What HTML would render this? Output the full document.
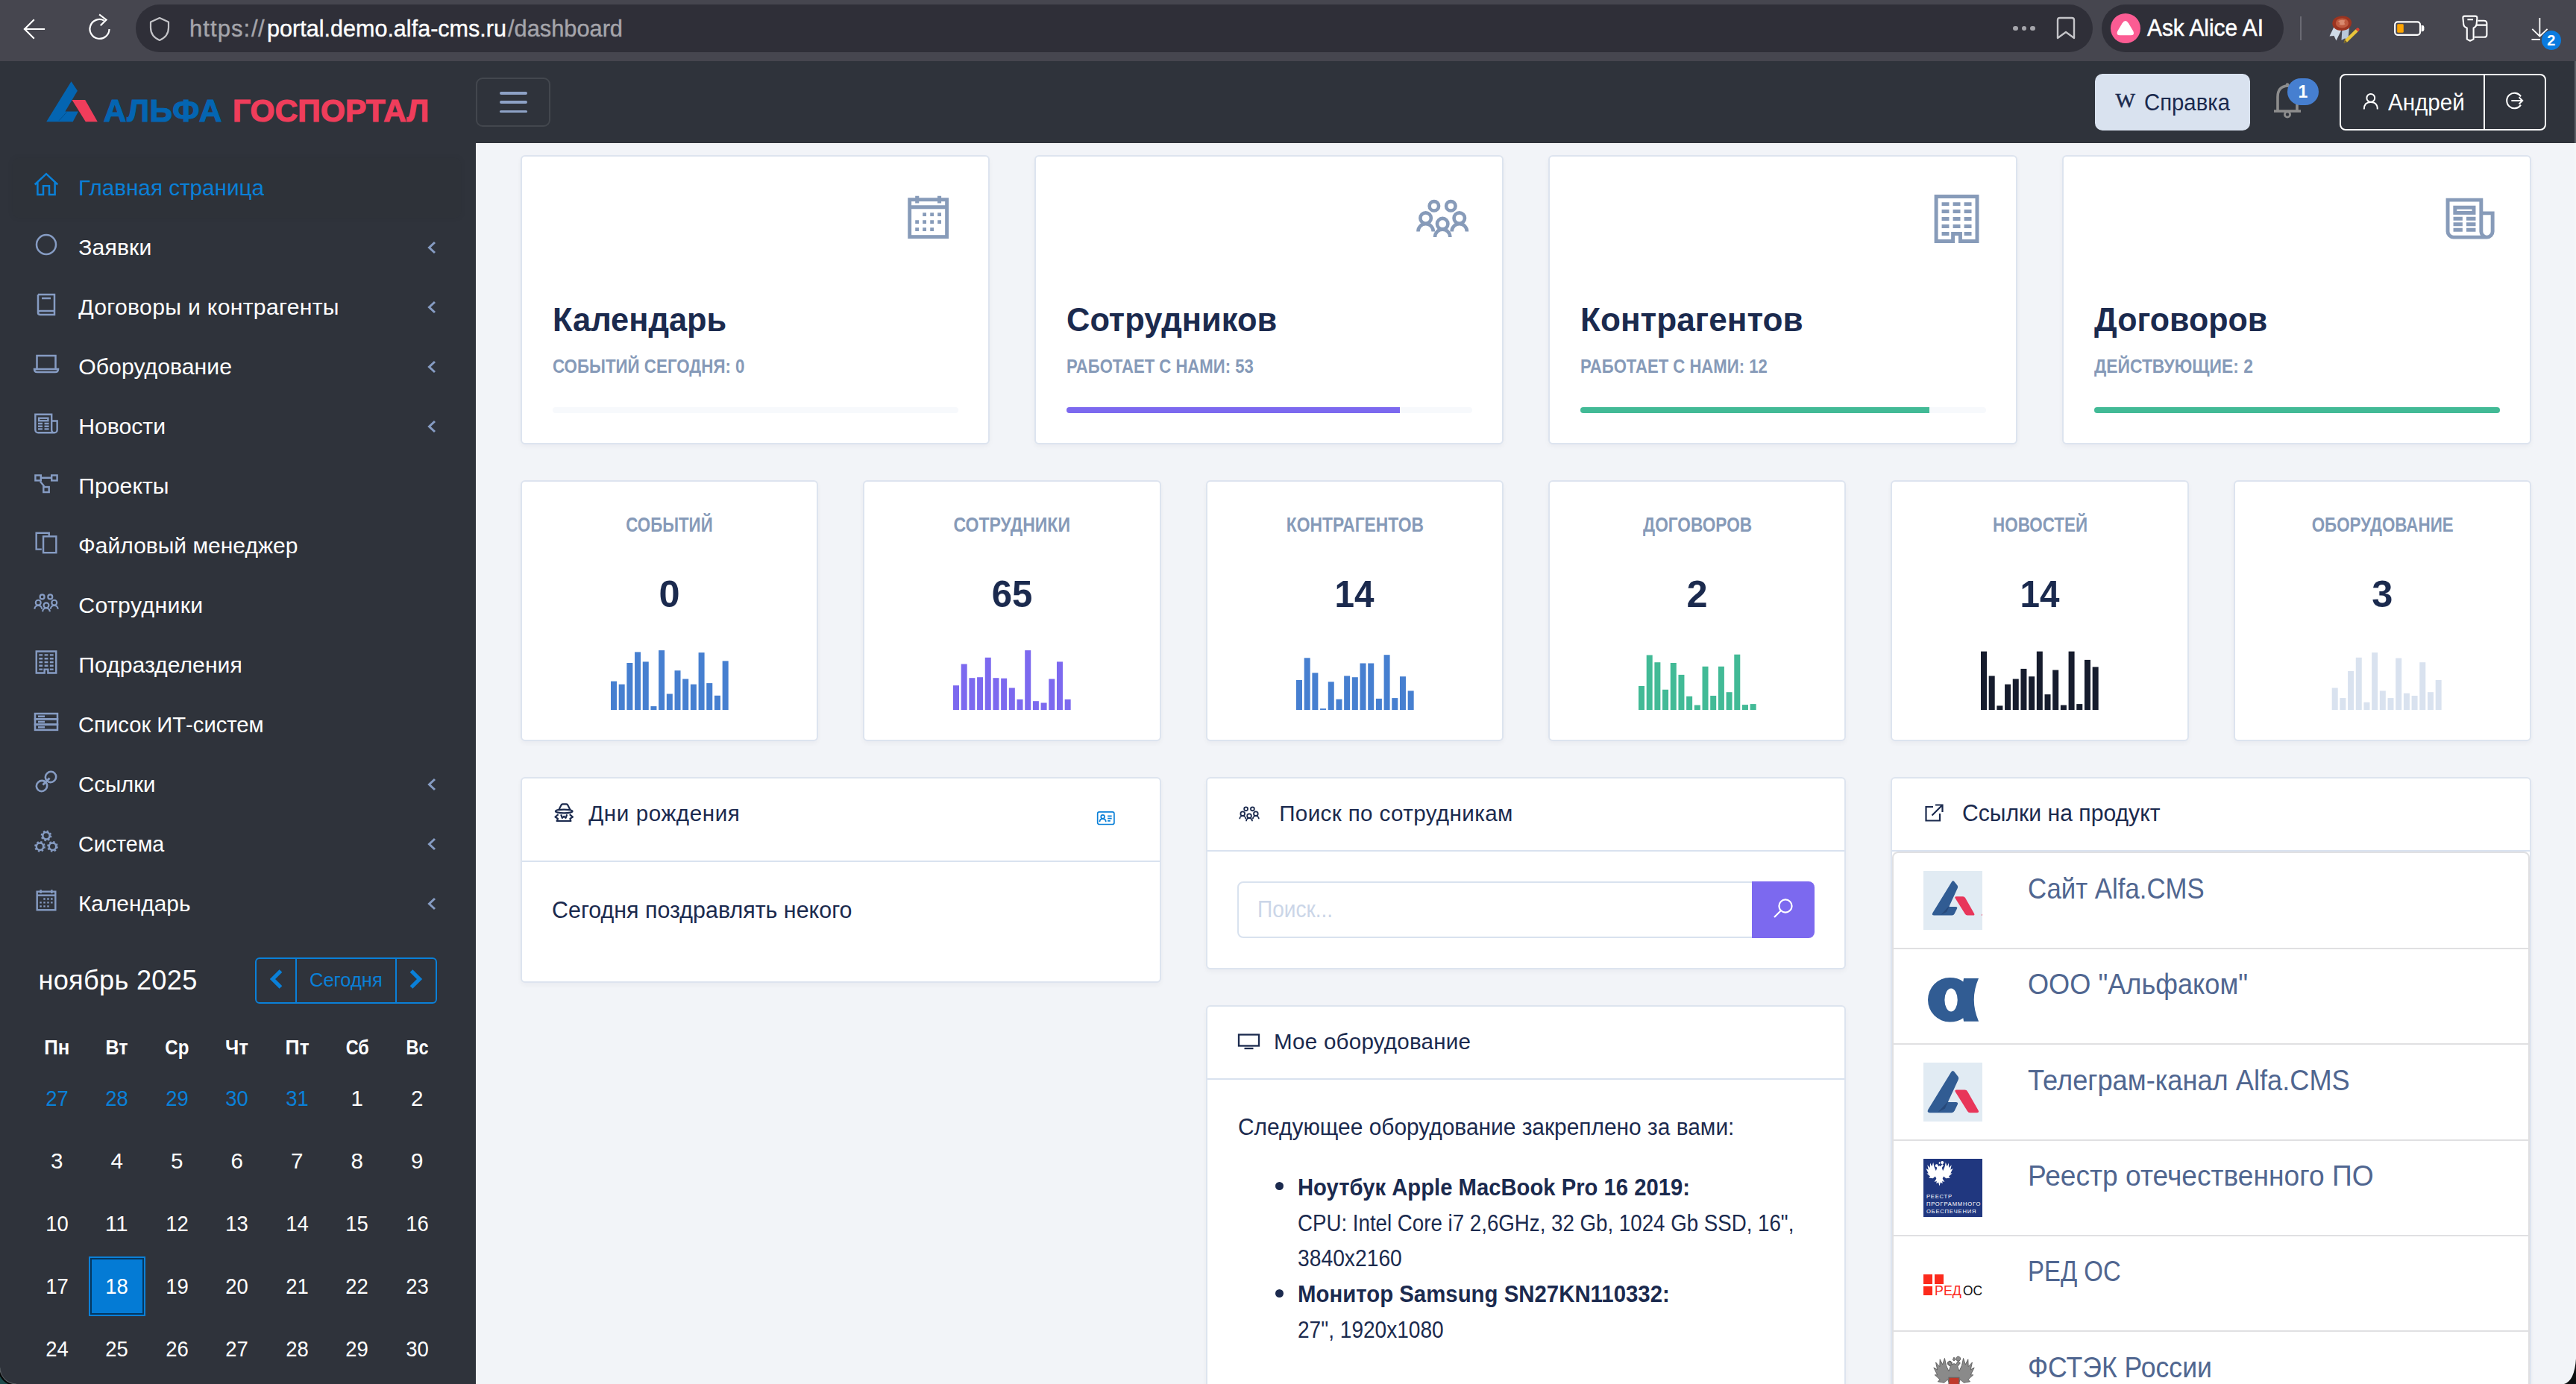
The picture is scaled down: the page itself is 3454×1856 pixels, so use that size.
<!DOCTYPE html><html lang="ru"><head><meta charset="utf-8"><meta name="viewport" content="width=3454"><title>Альфа Госпортал</title><style>

html,body{margin:0;padding:0;width:3454px;height:1856px;overflow:hidden}
body{font-family:"Liberation Sans",sans-serif;background:#f2f4f8}
#root{position:relative;width:3454px;height:1856px;overflow:hidden;background:#f2f4f8}
.a,.t{position:absolute;display:block}
.t{white-space:nowrap;line-height:1;font-style:normal}
i{font-style:normal}
#chromebg{position:absolute;left:0;top:0;width:3454px;height:82px;background:#46464f}
.urlpill{position:absolute;left:182px;top:6px;width:2624px;height:64px;border-radius:32px;background:#2f2f38}
.alicepill{position:absolute;left:2818px;top:6px;width:244px;height:64px;border-radius:32px;background:#2f2f38}
#headerbg{position:absolute;left:0;top:82px;width:3454px;height:110px;background:#2f333b}
#header>*,#sidebar>*,#chrome>*{ }
#sidebarbg{position:absolute;left:0;top:192px;width:638px;height:1664px;background:#2f333b}
.toggler{box-sizing:border-box;border:2px solid #43474e;border-radius:9px}
.helpbtn{background:#d9e2ef;border-radius:10px}
.usergrp{box-sizing:border-box;border:2.4px solid #fff;border-radius:8px}
.active{background:rgba(0,0,0,.02);border-radius:8px;box-shadow:0 0 8px rgba(0,0,0,.06)}
.calbtn{box-sizing:border-box;border:2px solid #0a80d8;border-radius:6px}
.today{box-sizing:border-box;background:#047bd5;border:2.4px solid #0a80d8;box-shadow:inset 0 0 0 2px #04365f}
.card{box-sizing:border-box;background:#fff;border:2px solid #dde4ef;border-radius:6px;box-shadow:0 3px 6px rgba(22,28,45,.04)}
.prog{height:8px;border-radius:4px;background:#f7f9fc}
.sep{height:2.4px;background:#d9e2ef}
.inp{box-sizing:border-box;border:2.4px solid #d9e2ef;border-radius:8px 0 0 8px;background:#fff}
.sbtn{background:#7c69ef;border-radius:0 8px 8px 0}
.lg{box-sizing:border-box;border:2px solid #e0e0e2;border-radius:8px 8px 0 0;background:#fff}
#edge{position:absolute;right:0;top:82px;width:2px;height:1774px;background:rgba(255,255,255,.22)}
#hline{position:absolute;left:638px;top:191.6px;width:2816px;height:1.6px;background:#fff}

</style></head><body><div id="root">
<div id="main">
<div class="a card" style="left:698.0px;top:208.0px;width:629.0px;height:387.7px;"></div>
<svg class="a" style="left:1200.3px;top:248.3px" width="89.3" height="89.3" viewBox="-22 -22 44 44" fill="none" stroke="#879bb9" stroke-width="2.4"><rect x="-12.3" y="-12.3" width="24.6" height="24.6"/><path d="M-12.3 -7.35H12.3"/><path d="M-7.35 -14.7V-9.9M7.35 -14.7V-9.9" stroke-width="2.5"/><path d="M-3.68 -2.49H-1.30M1.27 -2.49H3.65M6.18 -2.49H8.56M-8.59 2.42H-6.21M-3.68 2.42H-1.30M1.27 2.42H3.65M6.18 2.42H8.56M-8.59 7.37H-6.21M-3.68 7.37H-1.30M1.27 7.37H3.65" stroke-width="2.38"/></svg>
<span class="t" style="left:741.4px;top:407.4px;font-size:44.50px;font-weight:700;transform:scaleX(0.9749);transform-origin:0 50%;color:#1b2a4e;">Календарь</span>
<span class="t" style="left:741.4px;top:478.1px;font-size:26.60px;font-weight:700;transform:scaleX(0.8401);transform-origin:0 50%;color:#869ab8;">СОБЫТИЙ СЕГОДНЯ: 0</span>
<div class="a prog" style="left:741.0px;top:546.0px;width:543.5px"></div>
<div class="a card" style="left:1387.0px;top:208.0px;width:629.0px;height:387.7px;"></div>
<svg class="a" style="left:1887.8px;top:246.2px" width="92.4" height="92.4" viewBox="-22 -22 44 44" fill="none" stroke="#879bb9" stroke-width="2.2"><circle cx="-5.4" cy="-7.57" r="2.96"/><circle cx="5.3" cy="-7.57" r="2.96"/><circle cx="-10.75" cy="0.17" r="3.44"/><circle cx="10.75" cy="0.17" r="3.44"/><circle cx="0" cy="3.79" r="3.44"/><path d="M-15.57 8.75V8.6A4.82 4.82 0 0 1 -5.93 8.6V8.75M5.93 8.75V8.6A4.82 4.82 0 0 1 15.57 8.6V8.75M-4.82 12.3V12.15A4.82 4.82 0 0 1 4.82 12.15V12.3"/></svg>
<span class="t" style="left:1430.4px;top:407.4px;font-size:44.50px;font-weight:700;transform:scaleX(0.9770);transform-origin:0 50%;color:#1b2a4e;">Сотрудников</span>
<span class="t" style="left:1430.4px;top:478.1px;font-size:26.60px;font-weight:700;transform:scaleX(0.8312);transform-origin:0 50%;color:#869ab8;">РАБОТАЕТ С НАМИ: 53</span>
<div class="a prog" style="left:1430.0px;top:546.0px;width:543.5px"></div><div class="a" style="left:1430.0px;top:546.0px;width:446.6px;height:8px;border-radius:4px 0 0 4px;background:#7c69ef"></div>
<div class="a card" style="left:2076.0px;top:208.0px;width:629.0px;height:387.7px;"></div>
<svg class="a" style="left:2577.5px;top:247.5px" width="91.1" height="91.1" viewBox="-22 -22 44 44" fill="none" stroke="#879bb9" stroke-width="2.4"><path d="M-2.37 14.52H-13.26V-14.52H13.26V14.52H2.37V9.63H-2.37Z" stroke-linecap="butt"/><path d="M-9.65 -9.63H-4.87M4.87 -9.63H9.65M-2.39 -9.63H2.39M-9.65 -4.82H-4.87M4.87 -4.82H9.65M-2.39 -4.82H2.39M-9.65 0.00H-4.87M4.87 0.00H9.65M-2.39 0.00H2.39M-9.65 4.82H-4.87M4.87 4.82H9.65M-2.39 4.82H2.39M-9.65 9.63H-4.87M4.87 9.63H9.65"/></svg>
<span class="t" style="left:2119.4px;top:407.4px;font-size:44.50px;font-weight:700;transform:scaleX(0.9925);transform-origin:0 50%;color:#1b2a4e;">Контрагентов</span>
<span class="t" style="left:2119.4px;top:478.1px;font-size:26.60px;font-weight:700;transform:scaleX(0.8312);transform-origin:0 50%;color:#869ab8;">РАБОТАЕТ С НАМИ: 12</span>
<div class="a prog" style="left:2119.0px;top:546.0px;width:543.5px"></div><div class="a" style="left:2119.0px;top:546.0px;width:468.2px;height:8px;border-radius:4px 0 0 4px;background:#42ba96"></div>
<div class="a card" style="left:2765.0px;top:208.0px;width:629.0px;height:387.7px;"></div>
<svg class="a" style="left:3267.0px;top:247.8px" width="90.2" height="90.2" viewBox="-22 -22 44 44" fill="none" stroke="#879bb9" stroke-width="2.4"><path d="M7.19 -3.52H14.66V8.46A3.74 3.74 0 0 1 10.93 12.2H-10.92A3.74 3.74 0 0 1 -14.66 8.46V-12.2H7.19V8.46A3.74 3.74 0 0 0 10.93 12.2"/><rect x="-9.9" y="-7.26" width="12.3" height="3.52"/><path d="M-11 0.04H-5M-2.47 0.04H3.6M-11 3.74H-5M-2.47 3.74H3.6M-11 7.40H-5M-2.47 7.40H3.6"/></svg>
<span class="t" style="left:2808.4px;top:407.4px;font-size:44.50px;font-weight:700;transform:scaleX(0.9666);transform-origin:0 50%;color:#1b2a4e;">Договоров</span>
<span class="t" style="left:2808.4px;top:478.1px;font-size:26.60px;font-weight:700;transform:scaleX(0.8596);transform-origin:0 50%;color:#869ab8;">ДЕЙСТВУЮЩИЕ: 2</span>
<div class="a prog" style="left:2808.0px;top:546.0px;width:543.5px"></div><div class="a" style="left:2808.0px;top:546.0px;width:544.0px;height:8px;border-radius:4px;background:#42ba96"></div>
<div class="a card" style="left:698.0px;top:644.0px;width:399.3px;height:349.8px;"></div>
<span class="t" style="left:827.2px;top:690.8px;font-size:27.00px;font-weight:700;transform:scaleX(0.8250);transform-origin:50% 50%;color:#869ab8;">СОБЫТИЙ</span>
<span class="t" style="left:883.6px;top:772.4px;font-size:50.50px;font-weight:700;color:#1b2a4e;">0</span>
<svg class="a" style="left:818.9px;top:872px" width="158" height="80" viewBox="0 0 158 80" fill="#467fd0"><rect x="0.00" y="41.6" width="8" height="38.4"/><rect x="10.69" y="45.7" width="8" height="34.3"/><rect x="21.38" y="17.0" width="8" height="63.0"/><rect x="32.07" y="2.4" width="8" height="77.6"/><rect x="42.76" y="15.4" width="8" height="64.6"/><rect x="53.45" y="75.1" width="8" height="4.9"/><rect x="64.14" y="0.1" width="8" height="79.9"/><rect x="74.83" y="58.5" width="8" height="21.5"/><rect x="85.52" y="27.2" width="8" height="52.8"/><rect x="96.21" y="38.5" width="8" height="41.5"/><rect x="106.90" y="45.7" width="8" height="34.3"/><rect x="117.59" y="3.1" width="8" height="76.9"/><rect x="128.28" y="44.1" width="8" height="35.9"/><rect x="138.97" y="60.8" width="8" height="19.2"/><rect x="149.66" y="14.4" width="8" height="65.6"/></svg>
<div class="a card" style="left:1157.3px;top:644.0px;width:399.3px;height:349.8px;"></div>
<span class="t" style="left:1265.3px;top:690.8px;font-size:27.00px;font-weight:700;transform:scaleX(0.8537);transform-origin:50% 50%;color:#869ab8;">СОТРУДНИКИ</span>
<span class="t" style="left:1328.9px;top:772.4px;font-size:50.50px;font-weight:700;transform:scaleX(0.9720);transform-origin:50% 50%;color:#1b2a4e;">65</span>
<svg class="a" style="left:1278.2px;top:872px" width="158" height="80" viewBox="0 0 158 80" fill="#7c69ef"><rect x="0.00" y="47.2" width="8" height="32.8"/><rect x="10.69" y="18.5" width="8" height="61.5"/><rect x="21.38" y="37.2" width="8" height="42.8"/><rect x="32.07" y="36.2" width="8" height="43.8"/><rect x="42.76" y="9.8" width="8" height="70.2"/><rect x="53.45" y="37.2" width="8" height="42.8"/><rect x="64.14" y="37.7" width="8" height="42.3"/><rect x="74.83" y="50.5" width="8" height="29.5"/><rect x="85.52" y="65.9" width="8" height="14.1"/><rect x="96.21" y="0.1" width="8" height="79.9"/><rect x="106.90" y="68.2" width="8" height="11.8"/><rect x="117.59" y="70.5" width="8" height="9.5"/><rect x="128.28" y="38.5" width="8" height="41.5"/><rect x="138.97" y="15.4" width="8" height="64.6"/><rect x="149.66" y="65.9" width="8" height="14.1"/></svg>
<div class="a card" style="left:1616.7px;top:644.0px;width:399.3px;height:349.8px;"></div>
<span class="t" style="left:1707.5px;top:690.8px;font-size:27.00px;font-weight:700;transform:scaleX(0.8455);transform-origin:50% 50%;color:#869ab8;">КОНТРАГЕНТОВ</span>
<span class="t" style="left:1788.2px;top:772.4px;font-size:50.50px;font-weight:700;transform:scaleX(0.9435);transform-origin:50% 50%;color:#1b2a4e;">14</span>
<svg class="a" style="left:1737.5px;top:872px" width="158" height="80" viewBox="0 0 158 80" fill="#467fd0"><rect x="0.00" y="40.0" width="8" height="40.0"/><rect x="10.69" y="10.3" width="8" height="69.7"/><rect x="21.38" y="30.3" width="8" height="49.7"/><rect x="32.07" y="78.2" width="8" height="1.8"/><rect x="42.76" y="42.3" width="8" height="37.7"/><rect x="53.45" y="65.7" width="8" height="14.3"/><rect x="64.14" y="34.4" width="8" height="45.6"/><rect x="74.83" y="36.2" width="8" height="43.8"/><rect x="85.52" y="17.5" width="8" height="62.5"/><rect x="96.21" y="17.5" width="8" height="62.5"/><rect x="106.90" y="64.9" width="8" height="15.1"/><rect x="117.59" y="6.2" width="8" height="73.8"/><rect x="128.28" y="64.1" width="8" height="15.9"/><rect x="138.97" y="35.2" width="8" height="44.8"/><rect x="149.66" y="54.4" width="8" height="25.6"/></svg>
<div class="a card" style="left:2076.0px;top:644.0px;width:399.3px;height:349.8px;"></div>
<span class="t" style="left:2188.6px;top:690.8px;font-size:27.00px;font-weight:700;transform:scaleX(0.8383);transform-origin:50% 50%;color:#869ab8;">ДОГОВОРОВ</span>
<span class="t" style="left:2261.6px;top:772.4px;font-size:50.50px;font-weight:700;color:#1b2a4e;">2</span>
<svg class="a" style="left:2196.9px;top:872px" width="158" height="80" viewBox="0 0 158 80" fill="#42ba96"><rect x="0.00" y="48.0" width="8" height="32.0"/><rect x="10.69" y="6.5" width="8" height="73.5"/><rect x="21.38" y="16.2" width="8" height="63.8"/><rect x="32.07" y="52.8" width="8" height="27.2"/><rect x="42.76" y="17.0" width="8" height="63.0"/><rect x="53.45" y="32.9" width="8" height="47.1"/><rect x="64.14" y="61.8" width="8" height="18.2"/><rect x="74.83" y="73.6" width="8" height="6.4"/><rect x="85.52" y="21.8" width="8" height="58.2"/><rect x="96.21" y="61.0" width="8" height="19.0"/><rect x="106.90" y="21.8" width="8" height="58.2"/><rect x="117.59" y="56.2" width="8" height="23.8"/><rect x="128.28" y="5.7" width="8" height="74.3"/><rect x="138.97" y="73.1" width="8" height="6.9"/><rect x="149.66" y="72.1" width="8" height="7.9"/></svg>
<div class="a card" style="left:2535.3px;top:644.0px;width:399.3px;height:349.8px;"></div>
<span class="t" style="left:2658.5px;top:690.8px;font-size:27.00px;font-weight:700;transform:scaleX(0.8297);transform-origin:50% 50%;color:#869ab8;">НОВОСТЕЙ</span>
<span class="t" style="left:2706.9px;top:772.4px;font-size:50.50px;font-weight:700;transform:scaleX(0.9435);transform-origin:50% 50%;color:#1b2a4e;">14</span>
<svg class="a" style="left:2656.2px;top:872px" width="158" height="80" viewBox="0 0 158 80" fill="#161c2d"><rect x="0.00" y="1.6" width="8" height="78.4"/><rect x="10.69" y="34.4" width="8" height="45.6"/><rect x="21.38" y="74.4" width="8" height="5.6"/><rect x="32.07" y="45.7" width="8" height="34.3"/><rect x="42.76" y="38.5" width="8" height="41.5"/><rect x="53.45" y="24.9" width="8" height="55.1"/><rect x="64.14" y="35.2" width="8" height="44.8"/><rect x="74.83" y="1.6" width="8" height="78.4"/><rect x="85.52" y="59.2" width="8" height="20.8"/><rect x="96.21" y="26.5" width="8" height="53.5"/><rect x="106.90" y="73.6" width="8" height="6.4"/><rect x="117.59" y="1.6" width="8" height="78.4"/><rect x="128.28" y="72.1" width="8" height="7.9"/><rect x="138.97" y="12.9" width="8" height="67.1"/><rect x="149.66" y="22.4" width="8" height="57.6"/></svg>
<div class="a card" style="left:2994.7px;top:644.0px;width:399.3px;height:349.8px;"></div>
<span class="t" style="left:3079.7px;top:690.8px;font-size:27.00px;font-weight:700;transform:scaleX(0.8286);transform-origin:50% 50%;color:#869ab8;">ОБОРУДОВАНИЕ</span>
<span class="t" style="left:3180.3px;top:772.4px;font-size:50.50px;font-weight:700;color:#1b2a4e;">3</span>
<svg class="a" style="left:3115.5px;top:872px" width="158" height="80" viewBox="0 0 158 80" fill="#d9e2ef"><rect x="10.69" y="50.5" width="8" height="29.5"/><rect x="21.38" y="64.1" width="8" height="15.9"/><rect x="32.07" y="28.0" width="8" height="52.0"/><rect x="42.76" y="9.8" width="8" height="70.2"/><rect x="53.45" y="69.8" width="8" height="10.2"/><rect x="64.14" y="3.1" width="8" height="76.9"/><rect x="74.83" y="54.4" width="8" height="25.6"/><rect x="85.52" y="64.1" width="8" height="15.9"/><rect x="96.21" y="10.6" width="8" height="69.4"/><rect x="106.90" y="57.7" width="8" height="22.3"/><rect x="117.59" y="61.0" width="8" height="19.0"/><rect x="128.28" y="16.2" width="8" height="63.8"/><rect x="138.97" y="56.2" width="8" height="23.8"/><rect x="149.66" y="40.0" width="8" height="40.0"/></svg>
<div class="a card" style="left:698.0px;top:1042.0px;width:858.7px;height:275.7px;"></div>
<i class="a sep" style="left:700px;top:1153.5px;width:854.7px"></i>
<svg class="a" style="left:740.9px;top:1076.3px" width="30.4" height="27.2" viewBox="100 150 280 250" fill="none" stroke="#1b2a4e" stroke-width="20" stroke-linejoin="round"><path d="M175 245L208 180Q215 172 225 172H268Q278 172 285 180L318 245"/><ellipse cx="240" cy="260" rx="105" ry="22"/><path d="M170 298L132 330L165 352L152 380H325L315 352L348 330L310 298"/><path d="M203 300L218 342L240 322L262 342L277 300"/></svg>
<span class="t" style="left:789.2px;top:1076.4px;font-size:29.60px;letter-spacing:0.592px;color:#1b2a4e;">Дни рождения</span>
<svg class="a" style="left:1469.9px;top:1087.4px" width="25.6" height="20.4" viewBox="0 0 27 22" fill="none" stroke="#0a80d8" stroke-width="1.8"><rect x="1.5" y="2" width="24" height="18" rx="2.5"/><circle cx="9" cy="9" r="2.6"/><path d="M4.5 16.5Q4.5 12 9 12Q13.5 12 13.5 16.5M16 8H22M16 11.5H22M16 15H20"/></svg>
<span class="t" style="left:740.3px;top:1204.9px;font-size:31.00px;transform:scaleX(0.9813);transform-origin:0 50%;color:#1b2a4e;">Сегодня поздравлять некого</span>
<div class="a card" style="left:1616.7px;top:1042.0px;width:858.7px;height:257.5px;"></div>
<i class="a sep" style="left:1618.7px;top:1139.7px;width:854.7px"></i>
<svg class="a" style="left:1656.5px;top:1073.0px" width="36.1" height="36.1" viewBox="-22 -22 44 44" fill="none" stroke="#1b2a4e" stroke-width="2.2"><circle cx="-5.4" cy="-7.57" r="2.96"/><circle cx="5.3" cy="-7.57" r="2.96"/><circle cx="-10.75" cy="0.17" r="3.44"/><circle cx="10.75" cy="0.17" r="3.44"/><circle cx="0" cy="3.79" r="3.44"/><path d="M-15.57 8.75V8.6A4.82 4.82 0 0 1 -5.93 8.6V8.75M5.93 8.75V8.6A4.82 4.82 0 0 1 15.57 8.6V8.75M-4.82 12.3V12.15A4.82 4.82 0 0 1 4.82 12.15V12.3"/></svg>
<span class="t" style="left:1715.2px;top:1076.4px;font-size:29.60px;letter-spacing:0.380px;color:#1b2a4e;">Поиск по сотрудникам</span>
<div class="a inp" style="left:1659.3px;top:1182px;width:692px;height:76px"></div>
<div class="a sbtn" style="left:2349.3px;top:1182px;width:84px;height:76px"></div>
<span class="t" style="left:1685.7px;top:1203.8px;font-size:31.00px;transform:scaleX(0.9039);transform-origin:0 50%;color:#cbd6e8;">Поиск...</span>
<svg class="a" style="left:2376px;top:1203px" width="30" height="30" viewBox="0 0 30 30" fill="none" stroke="#fff" stroke-width="2.2"><circle cx="18" cy="12" r="8.6"/><path d="M11.8 18.2L3 27"/></svg>
<div class="a card" style="left:1616.7px;top:1348.0px;width:858.7px;height:560.0px;"></div>
<i class="a sep" style="left:1618.7px;top:1446px;width:854.7px"></i>
<svg class="a" style="left:1659px;top:1385px" width="32" height="24" viewBox="0 0 32 24" fill="none" stroke="#1b2a4e" stroke-width="2.3"><rect x="2" y="2.5" width="27" height="15"/><path d="M9.5 21H21.5"/></svg>
<span class="t" style="left:1707.9px;top:1382.4px;font-size:29.60px;letter-spacing:0.220px;color:#1b2a4e;">Мое оборудование</span>
<span class="t" style="left:1659.6px;top:1496.3px;font-size:31.00px;transform:scaleX(0.9644);transform-origin:0 50%;color:#1b2a4e;">Следующее оборудование закреплено за вами:</span>
<i class="a" style="left:1710px;top:1585px;width:11.4px;height:11.4px;border-radius:6px;background:#1b2a4e"></i>
<span class="t" style="left:1739.8px;top:1576.5px;font-size:31.00px;font-weight:700;transform:scaleX(0.9433);transform-origin:0 50%;color:#1b2a4e;">Ноутбук Apple MacBook Pro 16 2019:</span>
<span class="t" style="left:1739.8px;top:1624.5px;font-size:31.00px;transform:scaleX(0.8931);transform-origin:0 50%;color:#1b2a4e;">CPU: Intel Core i7 2,6GHz, 32 Gb, 1024 Gb SSD, 16",</span>
<span class="t" style="left:1739.8px;top:1672.3px;font-size:31.00px;transform:scaleX(0.9112);transform-origin:0 50%;color:#1b2a4e;">3840x2160</span>
<i class="a" style="left:1710px;top:1728.6px;width:11.4px;height:11.4px;border-radius:6px;background:#1b2a4e"></i>
<span class="t" style="left:1739.8px;top:1720.0px;font-size:31.00px;font-weight:700;transform:scaleX(0.9477);transform-origin:0 50%;color:#1b2a4e;">Монитор Samsung SN27KN110332:</span>
<span class="t" style="left:1739.8px;top:1768.1px;font-size:31.00px;transform:scaleX(0.9054);transform-origin:0 50%;color:#1b2a4e;">27", 1920x1080</span>
<div class="a card" style="left:2535.3px;top:1042.0px;width:858.7px;height:860.0px;"></div>
<i class="a sep" style="left:2537.3px;top:1139.5px;width:854.7px"></i>
<svg class="a" style="left:2580px;top:1077px" width="28" height="26" viewBox="0 0 28 26" fill="none" stroke="#1b2a4e" stroke-width="2.2"><path d="M12 5H2.5V23.5H21V14M15 2.5H24.5V12M24.5 2.5L10.5 16.5"/></svg>
<span class="t" style="left:2631.0px;top:1075.3px;font-size:31.00px;transform:scaleX(0.9725);transform-origin:0 50%;color:#1b2a4e;">Ссылки на продукт</span>
<div class="a lg" style="left:2537.2px;top:1142px;width:854.8px;height:760px"></div>
<span class="t" style="left:2718.9px;top:1173.1px;font-size:38.40px;transform:scaleX(0.9055);transform-origin:0 50%;color:#506690;">Сайт Alfa.CMS</span>
<svg class="a" style="left:2579.0px;top:1168.1px" width="79" height="79" viewBox="0 0 79 79"><rect width="79" height="79" fill="#e1ebf3"/><g transform=""><path d="M12.5 56L38 14.5Q39.8 12 41.6 14.5L45.6 19.6Q46.8 21.2 45.8 23L34.3 47.9H43Q46.4 47.9 44.9 50.8L41.6 57.6Q40.6 59.6 38.4 59.6H14.2Q10.6 59.6 12.5 56Z" fill="#315c93"/><path d="M23.5 58.8L34.9 46.6L34.3 47.9L31 55Z" fill="#27497a"/><path d="M42.6 36.6Q41.4 34.3 44 34.3H53Q55.1 34.3 56.2 36.2L68 57Q69.4 59.6 66.4 59.6H59Q56.9 59.6 55.9 57.8Z" fill="#e8365a"/></g><path d="M77.6 59.6L79 57.4V59.6Z" fill="#e8365a"/></svg>
<i class="a" style="left:2539px;top:1271.0px;width:851px;height:2px;background:#e0e0e2"></i>
<span class="t" style="left:2718.9px;top:1301.4px;font-size:38.40px;transform:scaleX(0.9416);transform-origin:0 50%;color:#506690;">ООО "Альфаком"</span>
<svg class="a" style="left:2584.9px;top:1311.4px" width="68.1" height="59.6" viewBox="138 870 377 330"><path fill="#315c93" fill-rule="evenodd" d="M300 870A162 165 0 1 0 300 1200C340 1200 375 1190 400 1170L404 1195H515Q445 1035 515 875H404L400 900C375 880 340 870 300 870ZM310 950A48 86 0 1 0 310 1122A48 86 0 1 0 310 950Z"/></svg>
<i class="a" style="left:2539px;top:1399.3px;width:851px;height:2px;background:#e0e0e2"></i>
<span class="t" style="left:2718.9px;top:1429.7px;font-size:38.40px;transform:scaleX(0.9431);transform-origin:0 50%;color:#506690;">Телеграм-канал Alfa.CMS</span>
<svg class="a" style="left:2579.0px;top:1424.7px" width="79" height="79" viewBox="0 0 79 79"><rect width="79" height="79" fill="#e1ebf3"/><g transform="translate(40.3 39) scale(1.21) translate(-40.5 -36.3)"><path d="M12.5 56L38 14.5Q39.8 12 41.6 14.5L45.6 19.6Q46.8 21.2 45.8 23L34.3 47.9H43Q46.4 47.9 44.9 50.8L41.6 57.6Q40.6 59.6 38.4 59.6H14.2Q10.6 59.6 12.5 56Z" fill="#315c93"/><path d="M23.5 58.8L34.9 46.6L34.3 47.9L31 55Z" fill="#27497a"/><path d="M42.6 36.6Q41.4 34.3 44 34.3H53Q55.1 34.3 56.2 36.2L68 57Q69.4 59.6 66.4 59.6H59Q56.9 59.6 55.9 57.8Z" fill="#e8365a"/></g></svg>
<i class="a" style="left:2539px;top:1527.6px;width:851px;height:2px;background:#e0e0e2"></i>
<span class="t" style="left:2718.9px;top:1558.0px;font-size:38.40px;transform:scaleX(0.9678);transform-origin:0 50%;color:#506690;">Реестр отечественного ПО</span>
<div class="a" style="left:2578.8px;top:1553.9px;width:79.2px;height:78.2px;background:#20377f"></div>
<svg class="a" style="left:2582.4px;top:1556.1px" width="37" height="35.8" viewBox="0 0 40 38" fill="#fff"><path d="M20 1.5L21.2 4L20 5L18.8 4ZM16 5.2A2.2 2.2 0 1 1 15.9 5.2L18.5 8.5L20 7.5L21.5 8.5L24 5.2A2.2 2.2 0 1 1 24.1 5.2L26 7L23.5 10.5L25 15L27.5 9.5L29 2.5L31 8.5L33.5 3.5L33.8 10.5L37.5 6.5L36 13.5L39.5 11.5L36 18.5L38.5 18.5L33.5 23L35.5 25L29.5 26L26 23L24.5 26.5L27.5 31L24 30L24.5 33.5L21.5 31.5L20 37L18.5 31.5L15.5 33.5L16 30L12.5 31L15.5 26.5L14 23L10.5 26L4.5 25L6.5 23L1.5 18.5L4 18.5L0.5 11.5L4 13.5L2.5 6.5L6.2 10.5L6.5 3.5L9 8.5L11 2.5L12.5 9.5L15 15L16.5 10.5L14 7Z"/></svg>
<span class="t" style="left:2582.9px;top:1600.5px;font-size:7.60px;letter-spacing:0.809px;color:#fff;">РЕЕСТР</span>
<span class="t" style="left:2582.9px;top:1611.1px;font-size:7.60px;letter-spacing:0.801px;color:#fff;">ПРОГРАММНОГО</span>
<span class="t" style="left:2582.9px;top:1621.4px;font-size:7.60px;letter-spacing:0.804px;color:#fff;">ОБЕСПЕЧЕНИЯ</span>
<i class="a" style="left:2539px;top:1655.9px;width:851px;height:2px;background:#e0e0e2"></i>
<span class="t" style="left:2718.9px;top:1686.3px;font-size:38.40px;transform:scaleX(0.8577);transform-origin:0 50%;color:#506690;">РЕД ОС</span>
<i class="a" style="left:2579.3px;top:1709.3px;width:12.2px;height:12.3px;background:#fc2a1c"></i>
<i class="a" style="left:2594.2px;top:1709.3px;width:12.2px;height:12.3px;background:#fc2a1c"></i>
<i class="a" style="left:2579.3px;top:1724.6px;width:12.2px;height:12.3px;background:#fc2a1c"></i>
<span class="t" style="left:2594.2px;top:1721.7px;font-size:18.20px;transform:scaleX(0.9834);transform-origin:0 50%;color:#fc2a1c;">РЕД</span>
<span class="t" style="left:2631.8px;top:1721.7px;font-size:18.20px;transform:scaleX(0.9524);transform-origin:0 50%;color:#111;">ОС</span>
<i class="a" style="left:2539px;top:1784.2px;width:851px;height:2px;background:#e0e0e2"></i>
<span class="t" style="left:2718.9px;top:1814.6px;font-size:38.40px;transform:scaleX(0.9274);transform-origin:0 50%;color:#506690;">ФСТЭК России</span>
<svg class="a" style="left:2592.0px;top:1817.6px" width="56" height="53" viewBox="0 0 40 38"><path d="M20 1.5L21.2 4L20 5L18.8 4ZM16 5.2A2.2 2.2 0 1 1 15.9 5.2L18.5 8.5L20 7.5L21.5 8.5L24 5.2A2.2 2.2 0 1 1 24.1 5.2L26 7L23.5 10.5L25 15L27.5 9.5L29 2.5L31 8.5L33.5 3.5L33.8 10.5L37.5 6.5L36 13.5L39.5 11.5L36 18.5L38.5 18.5L33.5 23L35.5 25L29.5 26L26 23L24.5 26.5L27.5 31L24 30L24.5 33.5L21.5 31.5L20 37L18.5 31.5L15.5 33.5L16 30L12.5 31L15.5 26.5L14 23L10.5 26L4.5 25L6.5 23L1.5 18.5L4 18.5L0.5 11.5L4 13.5L2.5 6.5L6.2 10.5L6.5 3.5L9 8.5L11 2.5L12.5 9.5L15 15L16.5 10.5L14 7Z" fill="#8a8a8a" stroke="#555" stroke-width=".6"/><path d="M15 21H25V33L20 36L15 33Z" fill="#c0392b" stroke="#666" stroke-width=".8"/></svg>
</div>
<div id="sidebar"><div id="sidebarbg"></div>
<div class="a active" style="left:17px;top:212px;width:601px;height:80px"></div>
<svg class="a" style="left:40.0px;top:225.5px" width="44.0" height="44.0" viewBox="-22 -22 44 44" fill="none" stroke="#0a80d8" stroke-width="2.5"><path d="M-15.3 -0.5L0 -14.9L15.3 -0.5M-11.6 -3.6V13H-4V1.2H4V13H11.6V-3.6"/></svg>
<span class="t" style="left:105.2px;top:236.8px;font-size:30.20px;transform:scaleX(0.9830);transform-origin:0 50%;color:#0a80d8;">Главная страница</span>
<svg class="a" style="left:40.0px;top:305.5px" width="44.0" height="44.0" viewBox="-22 -22 44 44" fill="none" stroke="#869cc3" stroke-width="2.5"><circle cx="0" cy="0" r="13"/></svg>
<span class="t" style="left:105.2px;top:316.8px;font-size:30.20px;letter-spacing:0.117px;color:#fff;">Заявки</span>
<svg class="a" style="left:572px;top:322.5px" width="14" height="18" viewBox="0 0 14 18" fill="none" stroke="#869cc3" stroke-width="3"><path d="M11 2L3.5 9L11 16"/></svg>
<svg class="a" style="left:40.0px;top:385.5px" width="44.0" height="44.0" viewBox="-22 -22 44 44" fill="none" stroke="#869cc3" stroke-width="2.5"><path d="M-11 -13H11V9H-8Q-11 9 -11 11.5Q-11 14 -8 14H11V9M-11 11.5V-13M-6 -8H6"/></svg>
<span class="t" style="left:105.2px;top:396.8px;font-size:30.20px;letter-spacing:0.299px;color:#fff;">Договоры и контрагенты</span>
<svg class="a" style="left:572px;top:402.5px" width="14" height="18" viewBox="0 0 14 18" fill="none" stroke="#869cc3" stroke-width="3"><path d="M11 2L3.5 9L11 16"/></svg>
<svg class="a" style="left:40.0px;top:465.5px" width="44.0" height="44.0" viewBox="-22 -22 44 44" fill="none" stroke="#869cc3" stroke-width="2.5"><path d="M-12.5 7V-11H12.5V7M-16 7H16Q16 11 12 11H-12Q-16 11 -16 7Z"/></svg>
<span class="t" style="left:105.2px;top:476.8px;font-size:30.20px;letter-spacing:0.045px;color:#fff;">Оборудование</span>
<svg class="a" style="left:572px;top:482.5px" width="14" height="18" viewBox="0 0 14 18" fill="none" stroke="#869cc3" stroke-width="3"><path d="M11 2L3.5 9L11 16"/></svg>
<svg class="a" style="left:40.0px;top:545.5px" width="44.0" height="44.0" viewBox="-22 -22 44 44" fill="none" stroke="#869cc3" stroke-width="2.4"><path d="M7.19 -3.52H14.66V8.46A3.74 3.74 0 0 1 10.93 12.2H-10.92A3.74 3.74 0 0 1 -14.66 8.46V-12.2H7.19V8.46A3.74 3.74 0 0 0 10.93 12.2"/><rect x="-9.9" y="-7.26" width="12.3" height="3.52"/><path d="M-11 0.04H-5M-2.47 0.04H3.6M-11 3.74H-5M-2.47 3.74H3.6M-11 7.40H-5M-2.47 7.40H3.6"/></svg>
<span class="t" style="left:105.2px;top:556.8px;font-size:30.20px;color:#fff;">Новости</span>
<svg class="a" style="left:572px;top:562.5px" width="14" height="18" viewBox="0 0 14 18" fill="none" stroke="#869cc3" stroke-width="3"><path d="M11 2L3.5 9L11 16"/></svg>
<svg class="a" style="left:40.0px;top:625.5px" width="44.0" height="44.0" viewBox="-22 -22 44 44" fill="none" stroke="#869cc3" stroke-width="2.4"><rect x="-14.6" y="-10.6" width="7.4" height="7"/><rect x="7.2" y="-10.6" width="7.4" height="7"/><rect x="-3.7" y="5.05" width="7.4" height="7"/><path d="M-7.2 -7.3H7.2M-8.2 -2.5L-2.7 4.3"/></svg>
<span class="t" style="left:105.2px;top:636.8px;font-size:30.20px;letter-spacing:0.036px;color:#fff;">Проекты</span>
<svg class="a" style="left:40.0px;top:705.5px" width="44.0" height="44.0" viewBox="-22 -22 44 44" fill="none" stroke="#869cc3" stroke-width="2.4"><path d="M3.74 -9.86V-13.2H-13.35V8.65H-6.17"/><rect x="-3.94" y="-8.65" width="17.29" height="21.85"/></svg>
<span class="t" style="left:105.2px;top:716.8px;font-size:30.20px;transform:scaleX(0.9943);transform-origin:0 50%;color:#fff;">Файловый менеджер</span>
<svg class="a" style="left:40.0px;top:785.5px" width="44.0" height="44.0" viewBox="-22 -22 44 44" fill="none" stroke="#869cc3" stroke-width="2.2"><circle cx="-5.4" cy="-7.57" r="2.96"/><circle cx="5.3" cy="-7.57" r="2.96"/><circle cx="-10.75" cy="0.17" r="3.44"/><circle cx="10.75" cy="0.17" r="3.44"/><circle cx="0" cy="3.79" r="3.44"/><path d="M-15.57 8.75V8.6A4.82 4.82 0 0 1 -5.93 8.6V8.75M5.93 8.75V8.6A4.82 4.82 0 0 1 15.57 8.6V8.75M-4.82 12.3V12.15A4.82 4.82 0 0 1 4.82 12.15V12.3"/></svg>
<span class="t" style="left:105.2px;top:796.8px;font-size:30.20px;letter-spacing:0.391px;color:#fff;">Сотрудники</span>
<svg class="a" style="left:40.0px;top:865.5px" width="44.0" height="44.0" viewBox="-22 -22 44 44" fill="none" stroke="#869cc3" stroke-width="2.4"><path d="M-2.37 14.52H-13.26V-14.52H13.26V14.52H2.37V9.63H-2.37Z" stroke-linecap="butt"/><path d="M-9.65 -9.63H-4.87M4.87 -9.63H9.65M-2.39 -9.63H2.39M-9.65 -4.82H-4.87M4.87 -4.82H9.65M-2.39 -4.82H2.39M-9.65 0.00H-4.87M4.87 0.00H9.65M-2.39 0.00H2.39M-9.65 4.82H-4.87M4.87 4.82H9.65M-2.39 4.82H2.39M-9.65 9.63H-4.87M4.87 9.63H9.65"/></svg>
<span class="t" style="left:105.2px;top:876.8px;font-size:30.20px;letter-spacing:0.005px;color:#fff;">Подразделения</span>
<svg class="a" style="left:40.0px;top:945.5px" width="44.0" height="44.0" viewBox="-22 -22 44 44" fill="none" stroke="#869cc3" stroke-width="2.5"><rect x="-15" y="-11" width="30" height="7.3"/><rect x="-15" y="-3.7" width="30" height="7.3"/><rect x="-15" y="3.6" width="30" height="7.3"/><path d="M-11 -7.3H-2M-11 0H-2M-11 7.3H-2" stroke-width="2.6"/></svg>
<span class="t" style="left:105.2px;top:956.8px;font-size:30.20px;transform:scaleX(0.9673);transform-origin:0 50%;color:#fff;">Список ИТ-систем</span>
<svg class="a" style="left:40.0px;top:1025.5px" width="44.0" height="44.0" viewBox="-22 -22 44 44" fill="none" stroke="#869cc3" stroke-width="2.6"><g transform="rotate(-45)"><rect x="-15.8" y="-6.9" width="14.6" height="13.8" rx="6.9"/><rect x="1.2" y="-6.9" width="14.6" height="13.8" rx="6.9"/><path d="M-6.4 0H6.4" stroke-width="3"/></g></svg>
<span class="t" style="left:105.2px;top:1036.8px;font-size:30.20px;transform:scaleX(0.9744);transform-origin:0 50%;color:#fff;">Ссылки</span>
<svg class="a" style="left:572px;top:1042.5px" width="14" height="18" viewBox="0 0 14 18" fill="none" stroke="#869cc3" stroke-width="3"><path d="M11 2L3.5 9L11 16"/></svg>
<svg class="a" style="left:40.0px;top:1105.5px" width="44.0" height="44.0" viewBox="-22 -22 44 44" fill="none" stroke="#869cc3" stroke-width="2.0"><circle cx="0.0" cy="-7.2" r="4.7" stroke-width="2.5"/><circle cx="0.0" cy="-7.2" r="6.4" stroke-width="1.9" stroke-dasharray="2.4 2.627"/><circle cx="-8.5" cy="7.3" r="4.7" stroke-width="2.5"/><circle cx="-8.5" cy="7.3" r="6.4" stroke-width="1.9" stroke-dasharray="2.4 2.627"/><circle cx="8.5" cy="7.3" r="4.7" stroke-width="2.5"/><circle cx="8.5" cy="7.3" r="6.4" stroke-width="1.9" stroke-dasharray="2.4 2.627"/></svg>
<span class="t" style="left:105.2px;top:1116.8px;font-size:30.20px;transform:scaleX(0.9480);transform-origin:0 50%;color:#fff;">Система</span>
<svg class="a" style="left:572px;top:1122.5px" width="14" height="18" viewBox="0 0 14 18" fill="none" stroke="#869cc3" stroke-width="3"><path d="M11 2L3.5 9L11 16"/></svg>
<svg class="a" style="left:40.0px;top:1185.5px" width="44.0" height="44.0" viewBox="-22 -22 44 44" fill="none" stroke="#869cc3" stroke-width="2.4"><rect x="-12.3" y="-12.3" width="24.6" height="24.6"/><path d="M-12.3 -7.35H12.3"/><path d="M-7.35 -14.7V-9.9M7.35 -14.7V-9.9" stroke-width="2.5"/><path d="M-3.68 -2.49H-1.30M1.27 -2.49H3.65M6.18 -2.49H8.56M-8.59 2.42H-6.21M-3.68 2.42H-1.30M1.27 2.42H3.65M6.18 2.42H8.56M-8.59 7.37H-6.21M-3.68 7.37H-1.30M1.27 7.37H3.65" stroke-width="2.38"/></svg>
<span class="t" style="left:105.2px;top:1196.8px;font-size:30.20px;transform:scaleX(0.9873);transform-origin:0 50%;color:#fff;">Календарь</span>
<svg class="a" style="left:572px;top:1202.5px" width="14" height="18" viewBox="0 0 14 18" fill="none" stroke="#869cc3" stroke-width="3"><path d="M11 2L3.5 9L11 16"/></svg>
<span class="t" style="left:51.4px;top:1297.0px;font-size:36.20px;letter-spacing:0.296px;color:#fff;">ноябрь 2025</span>
<div class="a calbtn" style="left:342.4px;top:1284px;width:243.4px;height:62px"></div>
<i class="a" style="left:395.6px;top:1285px;width:2px;height:60px;background:#0a80d8"></i>
<i class="a" style="left:530px;top:1285px;width:2px;height:60px;background:#0a80d8"></i>
<svg class="a" style="left:360px;top:1299px" width="22" height="28" viewBox="0 0 22 28" fill="none" stroke="#0a80d8" stroke-width="5.2"><path d="M16.5 3L5.5 14L16.5 25"/></svg>
<svg class="a" style="left:546px;top:1299px" width="22" height="28" viewBox="0 0 22 28" fill="none" stroke="#0a80d8" stroke-width="5.2"><path d="M5.5 3L16.5 14L5.5 25"/></svg>
<span class="t" style="left:414.7px;top:1302.3px;font-size:25.60px;transform:scaleX(0.9958);transform-origin:0 50%;color:#0a80d8;">Сегодня</span>
<span class="t" style="left:58.0px;top:1391.3px;font-size:27.50px;font-weight:700;transform:scaleX(0.9347);transform-origin:50% 50%;color:#fff;">Пн</span>
<span class="t" style="left:140.2px;top:1391.3px;font-size:27.50px;font-weight:700;transform:scaleX(0.9100);transform-origin:50% 50%;color:#fff;">Вт</span>
<span class="t" style="left:218.9px;top:1391.3px;font-size:27.50px;font-weight:700;transform:scaleX(0.8729);transform-origin:50% 50%;color:#fff;">Ср</span>
<span class="t" style="left:301.4px;top:1391.3px;font-size:27.50px;font-weight:700;transform:scaleX(0.9454);transform-origin:50% 50%;color:#fff;">Чт</span>
<span class="t" style="left:381.7px;top:1391.3px;font-size:27.50px;font-weight:700;transform:scaleX(0.9629);transform-origin:50% 50%;color:#fff;">Пт</span>
<span class="t" style="left:460.6px;top:1391.3px;font-size:27.50px;font-weight:700;transform:scaleX(0.8497);transform-origin:50% 50%;color:#fff;">Сб</span>
<span class="t" style="left:541.8px;top:1391.3px;font-size:27.50px;font-weight:700;transform:scaleX(0.8534);transform-origin:50% 50%;color:#fff;">Вс</span>
<div class="a today" style="left:119.3px;top:1684.6px;width:75.6px;height:80.2px"></div>
<span class="t" style="left:59.7px;top:1457.6px;font-size:29.60px;transform:scaleX(0.9263);transform-origin:50% 50%;color:#0a80d8;">27</span>
<span class="t" style="left:140.3px;top:1457.6px;font-size:29.60px;transform:scaleX(0.9263);transform-origin:50% 50%;color:#0a80d8;">28</span>
<span class="t" style="left:220.8px;top:1457.6px;font-size:29.60px;transform:scaleX(0.9263);transform-origin:50% 50%;color:#0a80d8;">29</span>
<span class="t" style="left:301.3px;top:1457.6px;font-size:29.60px;transform:scaleX(0.9263);transform-origin:50% 50%;color:#0a80d8;">30</span>
<span class="t" style="left:381.9px;top:1457.6px;font-size:29.60px;transform:scaleX(0.9263);transform-origin:50% 50%;color:#0a80d8;">31</span>
<span class="t" style="left:470.6px;top:1457.6px;font-size:29.60px;color:#fff;">1</span>
<span class="t" style="left:551.1px;top:1457.6px;font-size:29.60px;color:#fff;">2</span>
<span class="t" style="left:68.0px;top:1541.6px;font-size:29.60px;color:#fff;">3</span>
<span class="t" style="left:148.5px;top:1541.6px;font-size:29.60px;color:#fff;">4</span>
<span class="t" style="left:229.0px;top:1541.6px;font-size:29.60px;color:#fff;">5</span>
<span class="t" style="left:309.6px;top:1541.6px;font-size:29.60px;color:#fff;">6</span>
<span class="t" style="left:390.1px;top:1541.6px;font-size:29.60px;color:#fff;">7</span>
<span class="t" style="left:470.6px;top:1541.6px;font-size:29.60px;color:#fff;">8</span>
<span class="t" style="left:551.1px;top:1541.6px;font-size:29.60px;color:#fff;">9</span>
<span class="t" style="left:59.7px;top:1625.6px;font-size:29.60px;transform:scaleX(0.9263);transform-origin:50% 50%;color:#fff;">10</span>
<span class="t" style="left:141.4px;top:1625.6px;font-size:29.60px;transform:scaleX(0.9926);transform-origin:50% 50%;color:#fff;">11</span>
<span class="t" style="left:220.8px;top:1625.6px;font-size:29.60px;transform:scaleX(0.9263);transform-origin:50% 50%;color:#fff;">12</span>
<span class="t" style="left:301.3px;top:1625.6px;font-size:29.60px;transform:scaleX(0.9263);transform-origin:50% 50%;color:#fff;">13</span>
<span class="t" style="left:381.9px;top:1625.6px;font-size:29.60px;transform:scaleX(0.9263);transform-origin:50% 50%;color:#fff;">14</span>
<span class="t" style="left:462.4px;top:1625.6px;font-size:29.60px;transform:scaleX(0.9263);transform-origin:50% 50%;color:#fff;">15</span>
<span class="t" style="left:542.9px;top:1625.6px;font-size:29.60px;transform:scaleX(0.9263);transform-origin:50% 50%;color:#fff;">16</span>
<span class="t" style="left:59.7px;top:1709.6px;font-size:29.60px;transform:scaleX(0.9263);transform-origin:50% 50%;color:#fff;">17</span>
<span class="t" style="left:140.3px;top:1709.6px;font-size:29.60px;transform:scaleX(0.9263);transform-origin:50% 50%;color:#fff;">18</span>
<span class="t" style="left:220.8px;top:1709.6px;font-size:29.60px;transform:scaleX(0.9263);transform-origin:50% 50%;color:#fff;">19</span>
<span class="t" style="left:301.3px;top:1709.6px;font-size:29.60px;transform:scaleX(0.9263);transform-origin:50% 50%;color:#fff;">20</span>
<span class="t" style="left:381.9px;top:1709.6px;font-size:29.60px;transform:scaleX(0.9263);transform-origin:50% 50%;color:#fff;">21</span>
<span class="t" style="left:462.4px;top:1709.6px;font-size:29.60px;transform:scaleX(0.9263);transform-origin:50% 50%;color:#fff;">22</span>
<span class="t" style="left:542.9px;top:1709.6px;font-size:29.60px;transform:scaleX(0.9263);transform-origin:50% 50%;color:#fff;">23</span>
<span class="t" style="left:59.7px;top:1793.6px;font-size:29.60px;transform:scaleX(0.9263);transform-origin:50% 50%;color:#fff;">24</span>
<span class="t" style="left:140.3px;top:1793.6px;font-size:29.60px;transform:scaleX(0.9263);transform-origin:50% 50%;color:#fff;">25</span>
<span class="t" style="left:220.8px;top:1793.6px;font-size:29.60px;transform:scaleX(0.9263);transform-origin:50% 50%;color:#fff;">26</span>
<span class="t" style="left:301.3px;top:1793.6px;font-size:29.60px;transform:scaleX(0.9263);transform-origin:50% 50%;color:#fff;">27</span>
<span class="t" style="left:381.9px;top:1793.6px;font-size:29.60px;transform:scaleX(0.9263);transform-origin:50% 50%;color:#fff;">28</span>
<span class="t" style="left:462.4px;top:1793.6px;font-size:29.60px;transform:scaleX(0.9263);transform-origin:50% 50%;color:#fff;">29</span>
<span class="t" style="left:542.9px;top:1793.6px;font-size:29.60px;transform:scaleX(0.9263);transform-origin:50% 50%;color:#fff;">30</span>
</div>
<div id="header"><div id="headerbg"></div>
<svg class="a" style="left:56px;top:104px" width="84" height="66" viewBox="56 104 84 66"><path d="M62.2 163.2L95.5 109.2L103.9 121.7L87.4 149.4H105L97.7 163.2Z" fill="#0465b2"/><path d="M79.2 161.6L89.6 150.1" stroke="#03518f" stroke-width="1" fill="none"/><path d="M96.6 134.1H114.2L130.8 163.2H114.8Z" fill="#ef3d5b"/></svg>
<span class="t" style="left:138.8px;top:127.5px;font-size:42.40px;font-weight:700;letter-spacing:0.371px;color:#0465b2;-webkit-text-stroke:1.2px #0465b2;">АЛЬФА</span>
<span class="t" style="left:312.0px;top:127.5px;font-size:42.40px;font-weight:700;letter-spacing:0.104px;color:#ef3d5b;-webkit-text-stroke:1.2px #ef3d5b;">ГОСПОРТАЛ</span>
<div class="a toggler" style="left:638px;top:104px;width:100px;height:66px"></div>
<i class="a" style="left:669.5px;top:123.0px;width:37px;height:3.6px;border-radius:2px;background:#8ea2c6"></i>
<i class="a" style="left:669.5px;top:135.3px;width:37px;height:3.6px;border-radius:2px;background:#8ea2c6"></i>
<i class="a" style="left:669.5px;top:147.5px;width:37px;height:3.6px;border-radius:2px;background:#8ea2c6"></i>
<div class="a helpbtn" style="left:2809px;top:99px;width:208px;height:76px"></div>
<span class="t" style="left:2836.5px;top:120.7px;font-family:'Liberation Serif',serif;font-size:28px;color:#1b2a4e;line-height:28px;-webkit-text-stroke:.5px #1b2a4e">W</span>
<span class="t" style="left:2875.0px;top:122.3px;font-size:31.00px;transform:scaleX(0.9456);transform-origin:0 50%;color:#1b2a4e;">Справка</span>
<svg class="a" style="left:3046px;top:108px" width="42" height="52" viewBox="0 0 42 52" fill="none" stroke="#8d8d8d" stroke-width="3.6"><path d="M3 41H39M8 41V22Q8 8 21 7Q34 8 34 22V41"/><circle cx="21" cy="45.5" r="3.6" stroke-width="2.8"/><circle cx="21" cy="5.5" r="2.2" fill="#8d8d8d" stroke="none"/></svg>
<i class="a" style="left:3067px;top:105px;width:42px;height:36px;border-radius:18px;background:#467fd0"></i>
<span class="t" style="left:3081.6px;top:112.0px;font-size:23.00px;font-weight:700;color:#fff;">1</span>
<div class="a usergrp" style="left:3137px;top:99px;width:277px;height:76px"></div>
<i class="a" style="left:3329.5px;top:100px;width:2.6px;height:74px;background:#fff"></i>
<svg class="a" style="left:3168.4px;top:123.6px" width="21.6" height="23.4" viewBox="0 0 24 26" fill="none" stroke="#fff" stroke-width="2.2"><circle cx="12" cy="8.2" r="6"/><path d="M2 25Q2 14.5 12 14.5Q22 14.5 22 25"/></svg>
<span class="t" style="left:3201.8px;top:121.6px;font-size:31.00px;transform:scaleX(0.9546);transform-origin:0 50%;color:#fff;">Андрей</span>
<svg class="a" style="left:3359.4px;top:122px" width="26" height="26" viewBox="0 0 28 28" fill="none" stroke="#fff" stroke-width="2.2"><path d="M22.6 8A11 11 0 1 0 22.6 20"/><path d="M9 14H25M20 9L25 14L20 19"/></svg>
</div>
<div id="chrome"><div id="chromebg"></div><div class="urlpill"></div><div class="alicepill"></div>
<svg class="a" style="left:30px;top:24px" width="34" height="30" viewBox="0 0 34 30" fill="none" stroke="#fff" stroke-width="2.2" stroke-linecap="square"><path d="M3 15H29M15 3L3 15L15 27"/></svg>
<svg class="a" style="left:116px;top:16px" width="36" height="40" viewBox="0 0 36 40" fill="none" stroke="#fff" stroke-width="2.2"><path d="M30.5 23A13 13 0 1 1 23.5 11.4"/><path d="M18 4L26.5 10.5L19.5 17.5" stroke-linecap="square"/></svg>
<svg class="a" style="left:199px;top:22px" width="30" height="34" viewBox="0 0 30 34" fill="none" stroke="#c4c4c8" stroke-width="2.2" stroke-linejoin="round"><path d="M15 2L27 7.5V15C27 23 22 29 15 32C8 29 3 23 3 15V7.5Z"/></svg>
<span class="t" style="left:254.0px;top:22.8px;font-size:31.00px;letter-spacing:1.056px;color:#a5a5ab;-webkit-text-stroke:.4px #a5a5ab;">https:</span>
<span class="t" style="left:336.9px;top:22.8px;font-size:31.00px;letter-spacing:0.376px;color:#a5a5ab;-webkit-text-stroke:.4px #a5a5ab;">//</span>
<span class="t" style="left:357.8px;top:22.8px;font-size:31.00px;transform:scaleX(0.9858);transform-origin:0 50%;color:#fff;-webkit-text-stroke:.4px #fff;">portal.demo.alfa-cms.ru</span>
<span class="t" style="left:681.0px;top:22.8px;font-size:31.00px;transform:scaleX(0.9927);transform-origin:0 50%;color:#a5a5ab;-webkit-text-stroke:.4px #a5a5ab;">/dashboard</span>
<i class="a" style="left:2699.2px;top:34.5px;width:6.6px;height:6.6px;border-radius:3.3px;background:#a5a5ab"></i>
<i class="a" style="left:2710.8px;top:34.5px;width:6.6px;height:6.6px;border-radius:3.3px;background:#a5a5ab"></i>
<i class="a" style="left:2722.4px;top:34.5px;width:6.6px;height:6.6px;border-radius:3.3px;background:#a5a5ab"></i>
<svg class="a" style="left:2756px;top:22px" width="28" height="32" viewBox="0 0 28 32" fill="none" stroke="#c4c4c8" stroke-width="2.4" stroke-linejoin="round"><path d="M3 5Q3 2 6 2H22Q25 2 25 5V29L14 21L3 29Z"/></svg>
<i class="a" style="left:2830px;top:18px;width:40px;height:40px;border-radius:20px;background:#fb5c93"></i>
<svg class="a" style="left:2837.4px;top:26.6px" width="25.6" height="21.4" viewBox="0 0 24 20"><path d="M12 1Q14 1 16 4L22 14Q24 19 19 19H5Q0 19 2 14L8 4Q10 1 12 1Z" fill="#fff"/></svg>
<span class="t" style="left:2879.0px;top:21.8px;font-size:31.00px;transform:scaleX(0.9632);transform-origin:0 50%;color:#fff;-webkit-text-stroke:.5px #fff;">Ask Alice AI</span>
<i class="a" style="left:3084px;top:22px;width:2px;height:32px;background:#6a6a73"></i>
<svg class="a" style="left:3118px;top:14px" width="50" height="46" viewBox="3118 14 50 46"><path d="M3130 35L3123.5 48.5L3129.5 48L3132.5 54.5L3140 39Z" fill="#cfdbe8"/><path d="M3140.5 39L3139.5 54L3144 51.5L3148.5 53L3150 36Z" fill="#b9c8da"/><g transform="translate(3140.2 31.2) scale(1 .76) translate(-3140.2 -29.9)"><path d="M3140.2 17.2Q3146 16.5 3150.5 21.5Q3154.5 26.5 3152.4 33.5Q3150 40.5 3142.5 42.6Q3134 44 3129.6 37.8Q3125.4 31 3128.6 24Q3132 17.6 3140.2 17.2Z" fill="#9c3420"/><circle cx="3140.4" cy="29.6" r="8.6" fill="#bf5a3f"/><path d="M3135 26Q3139 22.5 3144.5 25Q3142 28 3144.5 31.5Q3140.5 34.5 3136.5 32Q3138.5 29 3135 26Z" fill="#d98a6f"/></g><path d="M3158.6 39.2L3161.8 42.2L3147.2 56.6L3142.6 57.8L3144 53.4Z" fill="#e9c53b"/><path d="M3158.6 39.2L3160 37.8Q3161.4 36.6 3162.8 38L3163.2 38.6Q3164.4 40 3163 41.2L3161.8 42.2Z" fill="#d8412f"/><path d="M3144 53.4L3147.2 56.6L3142.6 57.8Z" fill="#6b5a2a"/></svg>
<svg class="a" style="left:3206px;top:24px" width="48" height="28" viewBox="3206 24 48 28" fill="none"><rect x="3211.2" y="29.4" width="33.8" height="17.4" rx="3.6" stroke="#fff" stroke-width="2.2"/><rect x="3214.2" y="32.3" width="8.6" height="11.5" rx="1.4" fill="#ffa400"/><path d="M3246.6 34H3248Q3250.4 34 3250.4 36.4V39.8Q3250.4 42.2 3248 42.2H3246.6Z" fill="#fff"/></svg>
<svg class="a" style="left:3296px;top:16px" width="44" height="44" viewBox="3296 16 44 44" fill="none" stroke="#fff" stroke-width="2.1" stroke-linejoin="round"><path d="M3304.6 21.6H3319Q3321.4 21.6 3321.4 24L3320.6 32.4Q3320 36.4 3316.6 37.4V52.6L3312 54.8L3307.8 52.6V37.4Q3303.6 36.4 3303.2 32.4L3302.4 24Q3302.4 21.6 3304.6 21.6Z"/><path d="M3322.4 27.8H3330.6Q3334.4 27.8 3334.4 31.6V46.4Q3334.4 49.8 3331 49.8H3317.6M3321 33.6H3334.4"/><path d="M3308.4 26.2H3316"/></svg>
<svg class="a" style="left:3390px;top:20px" width="30" height="38" viewBox="3390 20 30 38" fill="none" stroke="#fff" stroke-width="1.8"><path d="M3405.4 24V48.2M3395.3 38.8L3405.4 48.7L3415.6 38.8M3394.5 53H3406"/></svg>
<i class="a" style="left:3407.9px;top:41px;width:26px;height:26px;border-radius:13px;background:#0a7be0"></i>
<span class="t" style="left:3415.3px;top:44.3px;font-size:20.00px;font-weight:700;color:#fff;">2</span>
</div>
<div id="hline"></div><div id="edge"></div>
<svg class="a" style="left:0;top:1834.1px" width="21.9" height="21.9" viewBox="0 0 21.9 21.9"><rect width="22" height="22" fill="#1d4b4c"/><circle cx="21.9" cy="0" r="24.6" fill="#050607"/><circle cx="21.9" cy="0" r="22.5" fill="#5a6064"/><circle cx="21.9" cy="0" r="21.4" fill="#2f333b"/></svg>
<svg class="a" style="left:3430px;top:1820px" width="24" height="36" viewBox="0 0 24 36"><path d="M24 2V36H8Q22 32 24 2Z" fill="#0d0f10"/></svg>
</div></body></html>
